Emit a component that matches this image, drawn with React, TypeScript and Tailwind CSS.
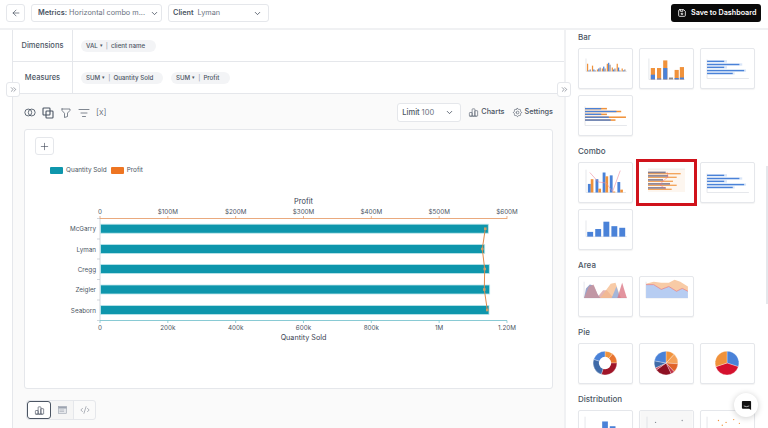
import React from "react";
import { ArrowLeft, ChevronDown, ChevronsRight, ListFilter, Plus, CodeXml } from "lucide-react";
import { TbChartBar, TbDeviceFloppy, TbFilter, TbSettings } from "react-icons/tb";

const BLUE = "#4a82d8";
const LIGHT = "#d8e5f8";
const ORANGE = "#f0923b";

function Thumb({ children, selected }: { children?: React.ReactNode; selected?: boolean }) {
  return (
    <div className={selected ? "relative h-[41px] w-[55px] bg-white outline outline-[3px] outline-[#d0121b]" : "h-[41px] w-[55px] rounded-[2px] border border-[#e5e7eb] bg-white shadow-[0_1px_1px_rgba(0,0,0,0.05)]"}>
      <svg viewBox="0 0 55 41" className="block h-full w-full">{children}</svg>
    </div>
  );
}

function Axes({ x = 6, y = 31, end = 50, top = 11 }: { x?: number; y?: number; end?: number; top?: number }) {
  return (
    <g stroke="#c9ced6" strokeWidth="0.5">
      <line x1={x} y1={top} x2={x} y2={y} />
      <line x1={x} y1={y} x2={end} y2={y} />
    </g>
  );
}

function Section({ title, children }: { title: string; children: React.ReactNode }) {
  return (
    <div className="flex flex-col gap-[6px]">
      <div className="text-[8px] leading-[10px] font-medium text-[#4b5563]">{title}</div>
      <div className="grid grid-cols-[55px_55px_55px] gap-[6px]">{children}</div>
    </div>
  );
}

function HBars({ orange }: { orange?: boolean }) {
  const rows = orange
    ? [[13.3, 17, 23], [16.3, 33, 38], [19.3, 17, 23], [22.3, 25, 43], [25.3, 27, 32]]
    : [[13, 18, 21], [16.3, 34, 37], [19.3, 18, 21], [22.7, 39, 41], [25.7, 27, 29]];
  return (
    <>
      <Axes />
      {rows.map(([y, w, o], i) => (
        <g key={i}>
          {orange ? <rect x="6" y={y - 0.8} width={o} height="1.6" fill={ORANGE} /> : <rect x="6" y={y - 1.2} width={o} height="2.4" fill={LIGHT} />}
          <rect x="6" y={y - 0.7} width={w} height="1.4" fill={BLUE} />
        </g>
      ))}
    </>
  );
}

function Columns() {
  const data = [[1, 8, 2], [2, 6, 1], [3, 2, 4], [5, 3, 3], [9, 8, 7], [2, 4, 3], [4, 8, 1], [1, 3, 2]];
  return (
    <>
      <Axes x={7} y={23.5} end={50} top={10} />
      {data.map(([b, o, g], i) => (
        <g key={i}>
          <rect x={8 + i * 5.2} y={23.5 - o} width="1.3" height={o} fill={ORANGE} />
          <rect x={9.4 + i * 5.2} y={23.5 - b} width="1.3" height={b} fill={BLUE} />
          <rect x={10.8 + i * 5.2} y={23.5 - g} width="1.3" height={g} fill="#9a8f8f" />
        </g>
      ))}
    </>
  );
}

function Stacked() {
  const data = [[11, 12, 5], [17.5, 12, 1], [24, 20, 12], [30, 2, 0], [36, 10, 1.5], [41.5, 13, 2]];
  return (
    <>
      <Axes x={9} y={32} end={47} top={10} />
      {data.map(([x, h, b], i) => (
        <g key={i}>
          <rect x={x} y={32 - h} width="4.4" height={h} fill={i === 3 ? "#8e8a8a" : ORANGE} />
          <rect x={x} y={32 - b} width="4.4" height={b} fill={BLUE} />
        </g>
      ))}
    </>
  );
}

function ComboColumns() {
  const d = [[9, 9, 14], [17, 14, 4], [24.5, 21, 17], [32, 18, 1], [40, 11, 3]];
  return (
    <>
      <Axes x={7} y={31} end={49} top={7} />
      {d.map(([x, b, o], i) => (
        <g key={i}>
          <rect x={x} y={31 - b} width="3" height={b} fill={BLUE} />
          <rect x={x + 3} y={31 - o} width="2.8" height={o} fill={ORANGE} />
        </g>
      ))}
      <polyline points="11,10 20,20 28,21 35,30 43,8" fill="none" stroke="#ef8a9b" strokeWidth="0.6" />
    </>
  );
}

function ComboHorizontal() {
  const rows = [[10.5, 17.7, 32.7], [14, 20, 28.7], [18, 15, 25], [22, 22, 28.7], [26, 17.7, 23.7]];
  return (
    <>
      <rect x="9" y="7" width="37" height="23" fill="#fdf6ef" />
      <line x1="9" y1="7" x2="46" y2="7" stroke="#c9ced6" strokeWidth="0.4" />
      {rows.map(([y, b, o], i) => (
        <g key={i}>
          <rect x="9" y={y + 0.7} width={o} height="1.1" fill={ORANGE} />
          <rect x="9" y={y - 0.9} width={b} height="1.6" fill="#857e91" />
        </g>
      ))}
      <polyline points="28,10 29,15 24,19 21,23 27,27" fill="none" stroke="#ef6c7d" strokeWidth="0.5" />
    </>
  );
}

function SingleColumns() {
  const d = [[8.3, 5], [16.7, 8], [25.3, 15.7], [33.7, 11], [42, 9.3]];
  return (
    <>
      <Axes x={7} y={28} end={50} top={11} />
      {d.map(([x, h]) => <rect key={x} x={x} y={28 - h} width="6.2" height={h} fill={BLUE} />)}
    </>
  );
}

function AreaA() {
  return (
    <>
      <Axes x={5} y={22} end={50} top={5} />
      <path d="M5 22 L7 12 L11 8 L15 9 L19 18 L22 22Z" fill="#6f7fb8" fillOpacity="0.7" />
      <path d="M5 22 L10 10 L15 8 L20 20 L25 14 L29 14 L34 20 L38 22Z" fill="#d68f8f" fillOpacity="0.65" />
      <path d="M22 22 L28 14 L33 7 L38 6 L42 18 L44 22Z" fill="#f5b98a" fillOpacity="0.75" />
      <path d="M34 22 L39 10 L43 22Z" fill="#8fb0e6" fillOpacity="0.8" />
      <path d="M40 22 L45 6 L50 22Z" fill="#d9707f" fillOpacity="0.75" />
    </>
  );
}

function AreaB() {
  return (
    <>
      <Axes x={6} y={22} end={50} top={5} />
      <path d="M6 22 L6 8 L14 8 L22 13 L30 10 L38 15 L44 12 L50 15 L50 22Z" fill="#b7cdf2" />
      <path d="M6 7 L14 5 L22 6 L30 6 L36 3 L42 5 L50 10 L50 15 L44 12 L38 15 L30 10 L22 13 L14 8 L6 8Z" fill="#f8cba6" />
      <polyline points="6,8 14,8 22,13 30,10 38,15 44,12 50,15" fill="none" stroke="#e2727c" strokeWidth="0.7" />
    </>
  );
}

function Pie({ cx = 27, cy = 20, r, slices, hole }: { cx?: number; cy?: number; r: number; slices: [number, string][]; hole?: number }) {
  const total = slices.reduce((s, [v]) => s + v, 0);
  let a = -Math.PI / 2;
  return (
    <>
      {slices.map(([v, c], i) => {
        const e = a + (v / total) * Math.PI * 2;
        const d = `M${cx} ${cy} L${cx + r * Math.cos(a)} ${cy + r * Math.sin(a)} A${r} ${r} 0 ${e - a > Math.PI ? 1 : 0} 1 ${cx + r * Math.cos(e)} ${cy + r * Math.sin(e)}Z`;
        a = e;
        return <path key={i} d={d} fill={c} stroke="#fff" strokeWidth="0.3" />;
      })}
      {hole ? <circle cx={cx} cy={cy} r={hole} fill="#fff" /> : null}
    </>
  );
}

function CirclesIcon() {
  return (
    <svg viewBox="0 0 14 10" className="h-[9px] w-[12px]" fill="none" stroke="#4b5563" strokeWidth="1">
      <circle cx="5" cy="5" r="4" />
      <circle cx="9" cy="5" r="4" />
    </svg>
  );
}

function CopyIcon() {
  return (
    <svg viewBox="0 0 12 12" className="h-[12px] w-[12px]" fill="none" stroke="#4b5563" strokeWidth="1.1">
      <rect x="1" y="1" width="7" height="7" rx="0.8" />
      <rect x="4" y="4" width="7" height="7" rx="0.8" />
    </svg>
  );
}

function TableIcon() {
  return (
    <svg viewBox="0 0 12 10" className="h-[8px] w-[9px]">
      <rect x="0.5" y="0.5" width="11" height="9" fill="#e5e7eb" stroke="#9ca3af" strokeWidth="0.8" />
      <rect x="0.5" y="0.5" width="11" height="2.5" fill="#9ca3af" />
      <line x1="2" y1="5" x2="8" y2="5" stroke="#9ca3af" strokeWidth="0.7" />
      <line x1="2" y1="7" x2="8" y2="7" stroke="#9ca3af" strokeWidth="0.7" />
    </svg>
  );
}

function Chip({ agg, name, className }: { agg: string; name: string; className: string }) {
  return (
    <div className={`flex h-[12px] items-center rounded-full bg-[#f3f4f6] pl-[5px] text-[6.2px] font-medium text-[#4b5563] ${className}`}>
      <span>{agg}</span>
      <span className="ml-[2px] text-[5px]">▾</span>
      <span className="mx-[3px] text-[#9ca3af]">|</span>
      <span>{name}</span>
    </div>
  );
}

function Chart() {
  const cats = ["McGarry", "Lyman", "Cregg", "Zeigler", "Seaborn"];
  const ys = [228.7, 249, 269, 289.5, 310];
  const ends = [488.3, 484.7, 489.3, 489.7, 489];
  const pts = [485.3, 482.3, 484.7, 484.3, 487.3];
  const top = ["0", "$100M", "$200M", "$300M", "$400M", "$500M", "$600M"];
  const bottom = ["0", "200k", "400k", "600k", "800k", "1M", "1.20M"];
  const tx = (i: number) => 100 + i * 67.83;
  const line = pts.map((x, i) => `${i === 0 ? "M" : "L"}${x} ${ys[i]}`).join(" ");
  const textClass = "fill-[#4b5563] text-[6.3px]";
  return (
    <svg viewBox="25 190 527 155" className="block h-[155px] w-[527px]">
      <text x="303.5" y="204" textAnchor="middle" className="fill-[#374151] text-[7.4px]">Profit</text>
      {top.map((t, i) => (
        <g key={t}>
          <text x={tx(i)} y="214" textAnchor="middle" className={textClass}>{t}</text>
          <line x1={tx(i)} y1="216" x2={tx(i)} y2="219" stroke="#e8a06f" strokeWidth="0.8" />
        </g>
      ))}
      <line x1="100" y1="218.5" x2="507" y2="218.5" stroke="#e8a06f" strokeWidth="0.9" />
      {[218.5, 239, 259, 279.5, 300, 320.5].map((y) => (
        <line key={y} x1="97" y1={y} x2="100" y2={y} stroke="#b6bcc6" strokeWidth="0.6" />
      ))}
      <line x1="100" y1="218.5" x2="100" y2="320.5" stroke="#b6bcc6" strokeWidth="0.6" />
      {cats.map((c, i) => (
        <g key={c}>
          <text x="96" y={ys[i] + 2.5} textAnchor="end" className={textClass}>{c}</text>
          <rect x="100.5" y={ys[i] - 4.5} width={ends[i] - 100.5} height="9" fill="#0e96ac" stroke="#bfe6ec" strokeWidth="0.8" />
        </g>
      ))}
      <path d={line} fill="none" stroke="#e08a4c" strokeWidth="1" />
      {pts.map((x, i) => <rect key={i} x={x - 1.3} y={ys[i] - 1.3} width="2.6" height="2.6" fill="#c9a06a" />)}
      <line x1="100" y1="320.5" x2="507" y2="320.5" stroke="#7cc4cf" strokeWidth="0.9" />
      {bottom.map((t, i) => (
        <g key={t}>
          <line x1={tx(i)} y1="320.5" x2={tx(i)} y2="323" stroke="#7cc4cf" strokeWidth="0.8" />
          <text x={tx(i)} y="329.5" textAnchor="middle" className={textClass}>{t}</text>
        </g>
      ))}
      <text x="303.5" y="340" textAnchor="middle" className="fill-[#374151] text-[7.2px]">Quantity Sold</text>
    </svg>
  );
}

export default function App() {
  return (
    <div className="relative flex h-[428px] w-[768px] flex-col overflow-hidden bg-white font-['Inter',sans-serif] text-[#374151]">
      <header className="flex h-[30px] shrink-0 items-center border-b-2 border-[#f0f1f3] pb-[2px] pl-[6px] pr-[7px]">
        <button className="flex h-[18px] w-[19px] items-center justify-center rounded-[3px] border border-[#e5e7eb]">
          <ArrowLeft size={10} strokeWidth={1.5} />
        </button>
        <div className="ml-[6px] flex h-[18px] w-[131px] items-center rounded-[3px] border border-[#e5e7eb] pl-[6px] text-[7.3px]">
          <span className="font-semibold text-[#4b5563]">Metrics:</span>
          <span className="ml-[2px] whitespace-nowrap text-[#6b7280]">Horizontal combo m...</span>
          <ChevronDown size={9} className="ml-[5px]" />
        </div>
        <div className="ml-[6px] flex h-[18px] w-[101px] items-center rounded-[3px] border border-[#e5e7eb] pl-[4px] pr-[6px] text-[7.3px]">
          <span className="font-semibold text-[#4b5563]">Client</span>
          <span className="ml-[4px] text-[#6b7280]">Lyman</span>
          <ChevronDown size={9} className="ml-auto" />
        </div>
        <button className="ml-auto flex h-[18px] w-[90px] items-center gap-[4px] rounded-[3px] bg-[#0a0a0a] pl-[6px] text-[7.2px] font-semibold whitespace-nowrap text-white">
          <TbDeviceFloppy size={10} />
          Save to Dashboard
        </button>
      </header>

      <div className="flex min-h-0 flex-1">
        <main className="relative flex w-[566px] shrink-0 flex-col border-r-2 border-[#f0f1f3] pl-[12px]">
          <div className="flex h-[32px] shrink-0 border-b border-l border-[#e5e7eb]">
            <div className="flex w-[60px] items-center justify-center border-r border-[#e5e7eb] text-[7.5px] font-medium text-[#4b5563]">Dimensions</div>
            <div className="flex items-center pl-[8px]"><Chip agg="VAL" name="client name" className="w-[75px]" /></div>
          </div>
          <div className="flex h-[32px] shrink-0 border-b border-l border-[#e5e7eb]">
            <div className="flex w-[60px] items-center justify-center border-r border-[#e5e7eb] text-[7.5px] font-medium text-[#4b5563]">Measures</div>
            <div className="flex items-center gap-[8px] pl-[8px]">
              <Chip agg="SUM" name="Quantity Sold" className="w-[82px]" />
              <Chip agg="SUM" name="Profit" className="w-[59px]" />
            </div>
          </div>
          <div className="flex min-h-0 flex-1 flex-col border-l border-[#e5e7eb] bg-[#fafafa] pl-[11px] pr-[12px]">
            <div className="-mr-[1px] flex h-[35px] shrink-0 items-center pt-[2px]">
              <div className="flex items-center gap-[6px]">
                <CirclesIcon />
                <CopyIcon />
                <TbFilter size={12} strokeWidth={1.4} color="#4b5563" />
                <ListFilter size={12} strokeWidth={1.4} color="#4b5563" />
                <span className="text-[8.5px] font-light text-[#4b5563]">[x]</span>
              </div>
              <div className="ml-auto flex h-[19px] w-[64px] items-center rounded-[3px] border border-[#e5e7eb] bg-white px-[4px] text-[7.5px]">
                <span className="font-medium text-[#4b5563]">Limit</span>
                <span className="ml-[2px] text-[#6b7280]">100</span>
                <ChevronDown size={9} className="ml-auto mr-[2px]" />
              </div>
              <div className="ml-[7px] flex items-center gap-[2px] text-[7.3px] font-medium text-[#4b5563]"><TbChartBar size={11} strokeWidth={1.3} />Charts</div>
              <div className="ml-[7px] flex items-center gap-[2px] text-[7.3px] font-medium text-[#4b5563]"><TbSettings size={11} strokeWidth={1.3} />Settings</div>
            </div>
            <div className="h-[260px] w-[529px] shrink-0 rounded-[3px] border border-[#e5e7eb] bg-white">
              <button className="ml-[10px] mt-[7px] flex h-[18px] w-[19px] items-center justify-center rounded-[3px] border border-[#e5e7eb]"><Plus size={11} strokeWidth={1.3} /></button>
              <div className="ml-[25px] mt-[11px] flex h-[9px] items-center text-[6.4px] text-[#4b5563]">
                <span className="h-[7px] w-[13px] rounded-[1px] bg-[#0e96ac]" />
                <span className="ml-[3px]">Quantity Sold</span>
                <span className="ml-[4px] h-[7px] w-[13px] rounded-[1px] bg-[#ee7522]" />
                <span className="ml-[3px]">Profit</span>
              </div>
              <div className="mt-[15px]"><Chart /></div>
            </div>
            <div className="ml-[2px] mt-[11px] flex h-[20px] w-[70px] overflow-hidden rounded-[3px] border border-[#e5e7eb]">
              <div className="flex w-[24px] items-center justify-center rounded-[3px] border border-[#4b5563] bg-white"><TbChartBar size={11} strokeWidth={1.3} /></div>
              <div className="flex w-[23px] items-center justify-center border-r border-[#e5e7eb] bg-[#f5f5f5]"><TableIcon /></div>
              <div className="flex flex-1 items-center justify-center text-[#6b7280]"><CodeXml size={10} strokeWidth={1.3} /></div>
            </div>
          </div>
          <button className="absolute left-[6px] top-[52px] flex h-[15px] w-[14px] items-center justify-center rounded-[3px] border border-[#e5e7eb] bg-white"><ChevronsRight size={9} strokeWidth={1.3} /></button>
          <button className="absolute right-[-7px] top-[52px] flex h-[15px] w-[14px] items-center justify-center rounded-[3px] border border-[#e5e7eb] bg-white"><ChevronsRight size={9} strokeWidth={1.3} /></button>
        </main>

        <aside className="relative flex min-w-0 flex-1 flex-col gap-[10px] overflow-hidden pl-[12px] pt-[2px]">
          <Section title="Bar">
            <Thumb><Columns /></Thumb>
            <Thumb><Stacked /></Thumb>
            <Thumb><HBars /></Thumb>
            <Thumb><HBars orange /></Thumb>
          </Section>
          <Section title="Combo">
            <Thumb><ComboColumns /></Thumb>
            <Thumb selected><ComboHorizontal /></Thumb>
            <Thumb><HBars /></Thumb>
            <Thumb><SingleColumns /></Thumb>
          </Section>
          <Section title="Area">
            <Thumb><AreaA /></Thumb>
            <Thumb><AreaB /></Thumb>
          </Section>
          <Section title="Pie">
            <Thumb><Pie r={12.5} hole={6.5} slices={[[11, "#f0923b"], [14, "#e8742f"], [30, "#a01528"], [25, "#3f6aa8"], [20, "#4a82d8"]]} /></Thumb>
            <Thumb><Pie r={12.5} slices={[[12, "#f0923b"], [14, "#f5a25a"], [12, "#e0632a"], [5, "#c2354a"], [22, "#8e1023"], [3, "#c9556a"], [10, "#3f6aa8"], [22, "#4a82d8"]]} /></Thumb>
            <Thumb><Pie r={12.5} slices={[[30, "#4a82d8"], [40, "#d5112e"], [30, "#f0923b"]]} /></Thumb>
          </Section>
          <Section title="Distribution">
            <Thumb>
              <Axes x={6} y={30} top={6} />
              <rect x="24" y="11" width="6" height="19" fill={BLUE} />
              <rect x="32" y="16" width="6" height="14" fill={BLUE} />
            </Thumb>
            <Thumb>
              <rect width="55" height="41" fill="#f7f7f7" />
              <Axes x={7} y={30} top={6} />
              <circle cx="16" cy="12" r="0.7" fill="#8a8f98" />
              <circle cx="44" cy="10" r="0.7" fill="#8a8f98" />
            </Thumb>
            <Thumb>
              <Axes x={6} y={30} top={6} />
              {[[18, 10], [26, 12], [34, 9], [40, 13], [22, 15]].map(([x, y]) => <circle key={x} cx={x} cy={y} r="0.7" fill={ORANGE} />)}
            </Thumb>
          </Section>
          <div className="absolute right-0 top-[136px] h-[138px] w-[2px] bg-[#e5e7eb]" />
        </aside>
      </div>

      <div className="absolute bottom-[11px] right-[10px] flex h-[24px] w-[24px] items-center justify-center rounded-full bg-white shadow-[0_1px_6px_rgba(0,0,0,0.2)]">
        <svg viewBox="0 0 12 12" className="h-[11px] w-[11px]">
          <path d="M1 2 a1 1 0 0 1 1-1 h8 a1 1 0 0 1 1 1 v9 l-2-1.5 H2 a1 1 0 0 1-1-1Z" fill="#111" />
          <path d="M3 6.5 q3 1.5 6 0" stroke="#fff" strokeWidth="0.7" fill="none" />
        </svg>
      </div>
    </div>
  );
}
